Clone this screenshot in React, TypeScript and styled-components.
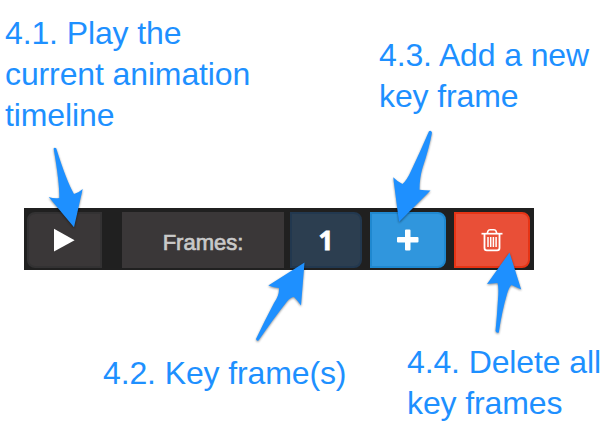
import React from "react";
import styled, { createGlobalStyle } from "styled-components";

const GlobalStyle = createGlobalStyle`
  body { margin: 0; background: #fff; }
  *, *::before, *::after { box-sizing: border-box; }
`;

const Page = styled.main`
  position: relative;
  width: 616px;
  height: 432px;
  overflow: hidden;
  display: grid;
  grid-template-rows: 208px 62px 162px;
  background: #fff;
  font-family: "Liberation Sans", Arial, sans-serif;
`;

const NoteRow = styled.section<{ $left: number; $gap: number }>`
  display: flex;
  align-items: flex-start;
  padding-left: ${(p) => p.$left}px;
  gap: ${(p) => p.$gap}px;
`;

const Note = styled.p<{ $top: number; $width: number }>`
  flex: none;
  width: ${(p) => p.$width}px;
  margin: ${(p) => p.$top}px 0 0;
  color: #1e90ff;
  font-size: 32px;
  line-height: 41px;
  letter-spacing: -0.12px;
  white-space: nowrap;
`;

const Toolbar = styled.div`
  width: 510px;
  height: 62px;
  margin-left: 24px;
  padding: 4px 4px 2px 3px;
  display: flex;
  background: #202020;
`;

const tones = {
  dark: ["#3a3738", "#333233"],
  navy: ["#2c3e50", "#22384f"],
  blue: ["#3096dd", "#1f88d0"],
  red: ["#e94f37", "#e63415"],
};

const ToolButton = styled.button<{
  $tone: keyof typeof tones;
  $width: number;
  $after: number;
  $side: "left" | "right";
}>`
  flex: none;
  width: ${(p) => p.$width}px;
  height: 56px;
  margin: 0 ${(p) => p.$after}px 0 0;
  padding: 0 ${(p) => (p.$side === "left" ? 2 : 0)}px 0 0;
  display: flex;
  align-items: center;
  justify-content: center;
  color: #fff;
  background: ${(p) => tones[p.$tone][0]};
  border: 2px solid ${(p) => tones[p.$tone][1]};
  border-radius: ${(p) => (p.$side === "left" ? "8px 0 0 8px" : "0 8px 8px 0")};
  font: bold 26px/52px "Open Sans", Arial, sans-serif;
`;

const Digit = styled.span`
  -webkit-text-stroke: 0.8px #fff;
`;

const FramesLabel = styled.span`
  flex: none;
  width: 162px;
  height: 56px;
  margin-right: 6px;
  padding-top: 2px;
  color: #c9c9c9;
  background: #3a3738;
  font-size: 22px;
  line-height: 58px;
  text-align: center;
  -webkit-text-stroke: 0.7px #c9c9c9;
`;

const Arrows = styled.svg`
  position: absolute;
  inset: 0;
  pointer-events: none;
  fill: #1e90ff;
  filter: drop-shadow(0 1px 1px rgba(0, 0, 0, 0.45));
`;

const PlayIcon = () => (
  <svg width="22" height="24" viewBox="0 0 22 24" fill="currentColor">
    <path d="M1 .8 21.6 12.200 1 23.600Z" />
  </svg>
);

const PlusIcon = () => (
  <svg width="22" height="22" viewBox="0 0 22 22" fill="currentColor">
    <path d="M9 .5h3.500q1 0 1 1V8h7q1 0 1 1v3.500q0 1-1 1h-7v7q0 1-1 1H9q-1 0-1-1v-7H1q-1 0-1-1V9q0-1 1-1h7V1.500q0-1 1-1Z" />
  </svg>
);

const TrashIcon = () => (
  <svg width="22" height="24" viewBox="0 0 22 24" fill="none" stroke="currentColor">
    <path d="M.5 5.700h21" strokeWidth="1.700" />
    <path d="M6.300 5.300 7 3Q7.500 1.700 9 1.700h4q1.500 0 2 1.300l.7 2.300" strokeWidth="1.600" />
    <path d="M3.500 6v14q0 2.300 2.300 2.300h10.400q2.300 0 2.300-2.300V6" strokeWidth="1.800" />
    <path d="M7 9v10M9.700 9v10M12.400 9v10M15.100 9v10" strokeWidth="1.500" />
  </svg>
);

export default function App() {
  return (
    <Page>
      <GlobalStyle />
      <NoteRow $left={5} $gap={114}>
        <Note $top={13} $width={260}>
          4.1. Play the
          <br />
          current animation
          <br />
          timeline
        </Note>
        <Note $top={35} $width={230}>
          4.3. Add a new
          <br />
          key frame
        </Note>
      </NoteRow>
      <Toolbar>
        <ToolButton $tone="dark" $width={75} $after={20} $side="left" aria-label="Play">
          <PlayIcon />
        </ToolButton>
        <FramesLabel>Frames:</FramesLabel>
        <ToolButton $tone="navy" $width={72} $after={8} $side="right">
          <Digit>1</Digit>
        </ToolButton>
        <ToolButton $tone="blue" $width={76} $after={8} $side="right" aria-label="Add key frame">
          <PlusIcon />
        </ToolButton>
        <ToolButton $tone="red" $width={76} $after={0} $side="right" aria-label="Delete all key frames">
          <TrashIcon />
        </ToolButton>
      </Toolbar>
      <NoteRow $left={103} $gap={44}>
        <Note $top={83} $width={260}>4.2. Key frame(s)</Note>
        <Note $top={72} $width={200}>
          4.4. Delete all
          <br />
          key frames
        </Note>
      </NoteRow>
      <Arrows width="616" height="432" viewBox="0 0 616 432">
        <path d="M74 227.300 48.700 197Q54 198.700 59.300 198Q59.500 182 53.600 148.500Q54.500 147.200 56.200 148.200Q66.500 181 74 194Q78.500 193 82.700 189Z" />
        <path d="M304.500 262.500 268.300 285.500Q274 287.500 279 288Q279.500 295 274 303Q265 320 256 339Q256.500 341.500 258.500 340.500Q274 318 287 301.500Q290.500 297 294 297Q298 301 301 305.500Z" />
        <path d="M399 222 393.200 177.200Q398 182 402.500 184Q407 180 411 171Q420 152 429 131.200Q431 130 432 132.500Q429.500 147 422.500 168Q419.500 178 419.500 189.800Q425 190.500 430.500 190.500Z" />
        <path d="M509.500 252.500 487 284Q492 283.500 497.500 283Q499 287 498 299Q497 316 495.500 331Q496.500 333.500 498.800 332.500Q502 311 507 294Q509 287 511.500 285Q516 287 521.200 289.500Z" />
      </Arrows>
    </Page>
  );
}
